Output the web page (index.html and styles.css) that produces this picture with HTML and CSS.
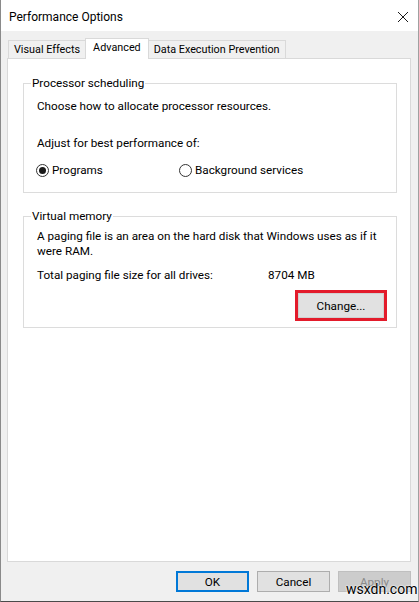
FILE: index.html
```html
<!DOCTYPE html>
<html lang="en">
<head>
    <meta charset="UTF-8">
    <title>Performance Options</title>
    <link rel="stylesheet" href="styles.css">
</head>
<body>

<div class="window">
    <div class="titlebar">
        <span class="title">Performance Options</span>
        <svg class="close" width="12" height="12" viewBox="0 0 12 12">
            <path d="M1 1 L11 11 M11 1 L1 11" stroke="#1a1a1a" stroke-width="1" fill="none"/>
        </svg>
    </div>

    <div class="content">
        <div class="tabs">
            <div class="tab">Visual Effects</div>
            <div class="tab active">Advanced</div>
            <div class="tab">Data Execution Prevention</div>
        </div>

        <div class="panel">
            <fieldset class="group">
                <legend>Processor scheduling</legend>
                <p class="intro">Choose how to allocate processor resources.</p>
                <p class="adjust">Adjust for best performance of:</p>
                <div class="radios">
                    <label class="radio"><span class="dot checked"></span>Programs</label>
                    <label class="radio"><span class="dot"></span>Background services</label>
                </div>
            </fieldset>

            <fieldset class="group vm">
                <legend>Virtual memory</legend>
                <p class="desc">A paging file is an area on the hard disk that Windows uses as if it were RAM.</p>
                <div class="total">
                    <span class="total-label">Total paging file size for all drives:</span>
                    <span>8704 MB</span>
                </div>
                <div class="change-row">
                    <div class="highlight">
                        <button class="btn change">Change...</button>
                    </div>
                </div>
            </fieldset>
        </div>

        <div class="buttons">
            <button class="btn default">OK</button>
            <button class="btn">Cancel</button>
            <button class="btn disabled">Apply</button>
        </div>
    </div>

    <div class="watermark">wsxdn.com</div>
</div>

</body>
</html>
```

FILE: styles.css
```css
body {
    margin: 0;
    font-family: Roboto, 'Noto Sans', sans-serif;
    font-size: 11.7px;
    color: #000;
    background-color: #fff;
}

.window {
    position: relative;
    width: 419px;
    height: 602px;
    box-sizing: border-box;
    border-left: 1px solid #8a8a8a;
    border-right: 1px solid #a0a0a0;
    border-bottom: 1px solid #4a4a4a;
    background-color: #f0f0f0;
    display: flex;
    flex-direction: column;
}

.titlebar {
    height: 31px;
    box-sizing: border-box;
    background-color: #fff;
    display: flex;
    align-items: center;
    justify-content: space-between;
    padding: 3px 9px 0 8px;
    flex-shrink: 0;
}

.title {
    font-size: 12px;
}

.content {
    flex: 1;
    display: flex;
    flex-direction: column;
    padding: 7px 7px 0 6px;
}

.tabs {
    display: flex;
    align-items: flex-end;
    height: 20px;
    padding-left: 1px;
    font-size: 10.8px;
}

.tab {
    height: 17px;
    line-height: 18px;
    padding: 0 5px;
    border: 1px solid #d9d9d9;
    border-bottom: none;
    background-color: #f0f0f0;
    margin-right: -1px;
}

.tab.active {
    height: 20px;
    line-height: 18px;
    background-color: #fff;
    position: relative;
    z-index: 1;
    margin-bottom: -1px;
    padding: 0 7px;
}

.panel {
    height: 504px;
    box-sizing: border-box;
    background-color: #fff;
    border: 1px solid #d9d9d9;
    padding: 16px 13px 0 15px;
}

.group {
    margin: 0;
    border: 1px solid #dcdcdc;
    padding: 7px 12px 14px 13px;
}

.group legend {
    padding: 0 1px;
    margin-left: -6px;
    line-height: 16px;
}

.group p {
    margin: 0;
    line-height: 16px;
}

.adjust {
    margin-top: 21px !important;
}

.radios {
    display: flex;
    margin-top: 11px;
    margin-left: -1px;
    line-height: 16px;
}

.radio {
    display: flex;
    align-items: center;
    gap: 3px;
    width: 143px;
}

.dot {
    width: 11px;
    height: 11px;
    border: 1px solid #333;
    border-radius: 50%;
    display: flex;
    align-items: center;
    justify-content: center;
    background-color: #fff;
}

.dot.checked::after {
    content: '';
    width: 7px;
    height: 7px;
    border-radius: 50%;
    background-color: #1a1a1a;
}

.vm {
    margin-top: 15px;
    padding: 5px 9px 6px 13px;
}

.vm .desc {
    line-height: 15px;
}

.total {
    display: flex;
    margin-top: 8px;
    line-height: 16px;
}

.total-label {
    width: 231px;
}

.change-row {
    display: flex;
    justify-content: flex-end;
    margin-top: 7px;
}

.highlight {
    border: 3px solid #e31b2b;
}

.btn {
    font-family: inherit;
    font-size: 11.7px;
    color: #000;
    background-color: #e1e1e1;
    border: 1px solid #adadad;
    margin: 0;
    padding: 0;
    width: 73px;
    height: 21px;
}

.btn.change {
    display: block;
    width: 86px;
    height: 25px;
    border-color: #d0d0d0;
}

.buttons {
    display: flex;
    justify-content: flex-end;
    gap: 8px;
    margin-top: 9px;
}

.btn.default {
    border: 2px solid #0078d7;
}

.btn.disabled {
    background-color: #cccccc;
    border-color: #bfbfbf;
    color: #8a8a8a;
}

.watermark {
    position: absolute;
    left: 345px;
    top: 581px;
    font-size: 14px;
    color: #000;
    text-shadow: 0 0 2px #fff, 0 0 2px #fff;
}
```
